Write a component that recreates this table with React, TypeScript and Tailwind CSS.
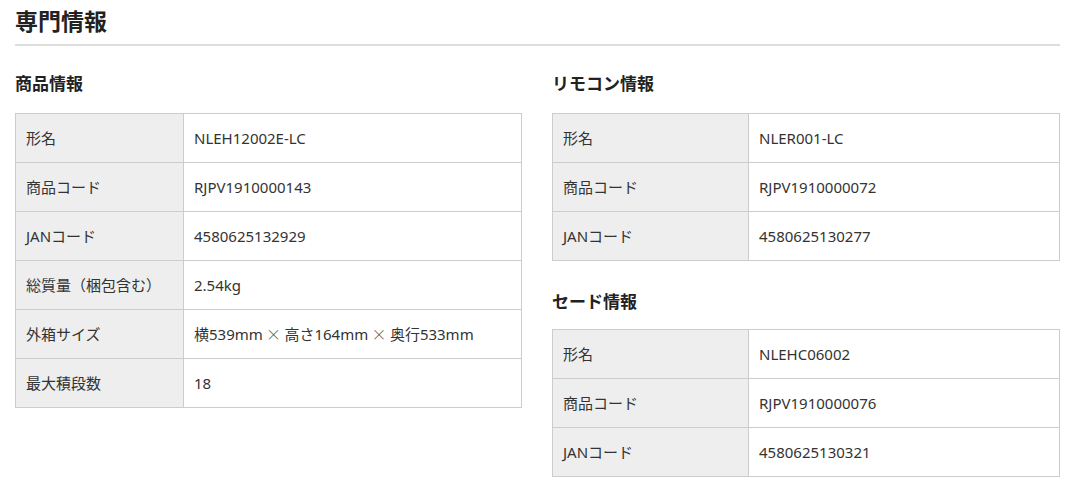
import React from 'react';

type Row = [string, React.ReactNode];

const Times = () => (
  <span className="text-[#555555] font-light" style={{ fontFamily: '"Noto Sans CJK JP", sans-serif' }}> × </span>
);

const productRows: Row[] = [
  ['形名', 'NLEH12002E-LC'],
  ['商品コード', 'RJPV1910000143'],
  ['JANコード', '4580625132929'],
  ['総質量（梱包含む）', '2.54kg'],
  ['外箱サイズ', <>横539mm<Times />高さ164mm<Times />奥行533mm</>],
  ['最大積段数', '18'],
];

const remoteRows: Row[] = [
  ['形名', 'NLER001-LC'],
  ['商品コード', 'RJPV1910000072'],
  ['JANコード', '4580625130277'],
];

const shadeRows: Row[] = [
  ['形名', 'NLEHC06002'],
  ['商品コード', 'RJPV1910000076'],
  ['JANコード', '4580625130321'],
];

function SpecTable({ rows, labelWidth }: { rows: Row[]; labelWidth: string }) {
  return (
    <div className="border-t border-x border-[#cccccc]">
      {rows.map(([label, value]) => (
        <div key={label} className="flex h-[49px] border-b border-[#cccccc]">
          <div className={`${labelWidth} shrink-0 bg-[#eeeeee] border-r border-[#cccccc] flex items-center pl-[10px]`}>
            {label}
          </div>
          <div className="flex-1 flex items-center pl-[10px] whitespace-pre">{value}</div>
        </div>
      ))}
    </div>
  );
}

export default function App() {
  return (
    <div
      className="min-h-screen bg-white text-[#333333] text-[15px] pl-[15px] pr-[20px] pt-[6px]"
      style={{ fontFamily: '"Noto Sans", "Noto Sans CJK JP", sans-serif' }}
    >
      {/* Title */}
      <h1 className="text-[23px] font-bold leading-[30px] text-[#222222]">専門情報</h1>
      <div className="mt-[8px] h-[2px] bg-[#dddddd]" />

      <div className="mt-[25px] flex gap-[30px]">
        {/* 商品情報 */}
        <div className="w-[507px]">
          <h2 className="text-[17px] font-bold leading-[26px] text-[#222222]">商品情報</h2>
          <div className="mt-[16px]">
            <SpecTable rows={productRows} labelWidth="w-[168px]" />
          </div>
        </div>

        {/* リモコン / セード */}
        <div className="w-[508px]">
          <h2 className="text-[17px] font-bold leading-[26px] text-[#222222]">リモコン情報</h2>
          <div className="mt-[16px]">
            <SpecTable rows={remoteRows} labelWidth="w-[196px]" />
          </div>

          <h2 className="mt-[28px] text-[17px] font-bold leading-[26px] text-[#222222]">セード情報</h2>
          <div className="mt-[14px]">
            <SpecTable rows={shadeRows} labelWidth="w-[196px]" />
          </div>
        </div>
      </div>
    </div>
  );
}
